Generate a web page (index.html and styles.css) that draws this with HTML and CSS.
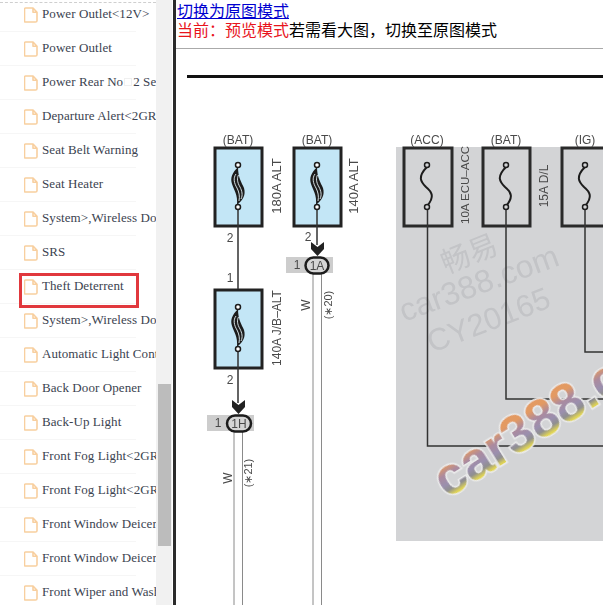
FILE: index.html
```html
<!DOCTYPE html>
<html lang="en">
<head>
  <meta charset="UTF-8">
  <meta name="viewport" content="width=device-width, initial-scale=1.0">
  <title>car388 wiring diagram</title>
  <link rel="stylesheet" href="styles.css">
</head>
<body>
  <svg class="defs" width="0" height="0">
    <defs>
      <symbol id="file" viewBox="0 0 14 17" preserveAspectRatio="none">
        <path d="M1.500 1h7.500l4 4.500v9a1.500 1.500 0 0 1-1.500 1.500h-10a1 1 0 0 1-1-1v-13a1 1 0 0 1 1-1z M9 1v4.500h4" fill="#fff" stroke="#f8cf9f" stroke-width="1.600" stroke-linejoin="round"/>
      </symbol>
    </defs>
  </svg>

  <aside class="sidebar">
    <ul class="tree">
      <li class="tree-row"><svg class="file-icon"><use href="#file"/></svg><span class="tree-label">Power Outlet&lt;12V&gt;</span></li>
      <li class="tree-row"><svg class="file-icon"><use href="#file"/></svg><span class="tree-label">Power Outlet</span></li>
      <li class="tree-row"><svg class="file-icon"><use href="#file"/></svg><span class="tree-label">Power Rear No<span class="tofu"></span>2 Seat</span></li>
      <li class="tree-row"><svg class="file-icon"><use href="#file"/></svg><span class="tree-label">Departure Alert&lt;2GR</span></li>
      <li class="tree-row"><svg class="file-icon"><use href="#file"/></svg><span class="tree-label">Seat Belt Warning</span></li>
      <li class="tree-row"><svg class="file-icon"><use href="#file"/></svg><span class="tree-label">Seat Heater</span></li>
      <li class="tree-row"><svg class="file-icon"><use href="#file"/></svg><span class="tree-label">System&gt;,Wireless Door</span></li>
      <li class="tree-row"><svg class="file-icon"><use href="#file"/></svg><span class="tree-label">SRS</span></li>
      <li class="tree-row is-marked"><svg class="file-icon"><use href="#file"/></svg><span class="tree-label">Theft Deterrent</span></li>
      <li class="tree-row"><svg class="file-icon"><use href="#file"/></svg><span class="tree-label">System&gt;,Wireless Door</span></li>
      <li class="tree-row"><svg class="file-icon"><use href="#file"/></svg><span class="tree-label">Automatic Light Control</span></li>
      <li class="tree-row"><svg class="file-icon"><use href="#file"/></svg><span class="tree-label">Back Door Opener</span></li>
      <li class="tree-row"><svg class="file-icon"><use href="#file"/></svg><span class="tree-label">Back-Up Light</span></li>
      <li class="tree-row"><svg class="file-icon"><use href="#file"/></svg><span class="tree-label">Front Fog Light&lt;2GR</span></li>
      <li class="tree-row"><svg class="file-icon"><use href="#file"/></svg><span class="tree-label">Front Fog Light&lt;2GR</span></li>
      <li class="tree-row"><svg class="file-icon"><use href="#file"/></svg><span class="tree-label">Front Window Deicer</span></li>
      <li class="tree-row"><svg class="file-icon"><use href="#file"/></svg><span class="tree-label">Front Window Deicer</span></li>
      <li class="tree-row"><svg class="file-icon"><use href="#file"/></svg><span class="tree-label">Front Wiper and Washer</span></li>
    </ul>
  </aside>
  <div class="scrollbar"><div class="scrollbar-thumb"></div></div>

  <main class="viewer">
    <div class="mode-bar">
      <a class="mode-link" href="#">切换为原图模式</a>
      <p class="mode-note"><span class="mode-current">当前：预览模式</span>若需看大图，切换至原图模式</p>
    </div>

    <!-- coordinates below are page pixels, so the viewBox starts at the viewer corner -->
    <svg class="diagram" viewBox="176 49 427 556" width="427" height="556">
      <defs>
        <linearGradient id="mark" x1="0" y1="0" x2="0" y2="1">
          <stop offset="0.3" stop-color="#e39a62"/>
          <stop offset="0.45" stop-color="#ab8a9f"/>
          <stop offset="0.6" stop-color="#9a8fae"/>
          <stop offset="0.7" stop-color="#8f8f8f"/>
          <stop offset="0.8" stop-color="#e2d654"/>
        </linearGradient>
        <filter id="soft" x="-5%" y="-5%" width="110%" height="110%"><feGaussianBlur stdDeviation="0.35"/></filter>
        <filter id="softer" x="-5%" y="-20%" width="110%" height="140%"><feGaussianBlur stdDeviation="0.7"/></filter>
        <filter id="bold-soft" x="-5%" y="-20%" width="110%" height="140%"><feGaussianBlur stdDeviation="0.6"/></filter>

        <g id="fuse-blue">
          <path d="M238 167C232 173 230 178 232 184C234 190 238 195 237 205C243 200 246 195 244 188C242 183 238 178 238 167z" fill="#1d1d1d"/>
          <path class="fuse-line" d="M236 174C233 178 234 183 237 188C239 192 240 196 239 201M238.500 175C237 178 237 182 240 187C242 191 243 195 241 199"/>
        </g>
        <path id="arrow-head" d="M-6.500 0L0 5L6.500 0V7L0 14L-6.500 7z"/>
      </defs>

      <rect x="187" y="75" width="416" height="3" fill="#111"/>

      <!-- grey panel -->
      <rect x="396" y="147" width="207" height="394" fill="#d3d4d6"/>

      <!-- pale watermark -->
      <g class="mark-pale" filter="url(#softer)">
        <text class="mark-cjk" transform="translate(446 274) rotate(-22)">畅易</text>
        <text class="mark-site" transform="translate(404 322) rotate(-20)">car388.com</text>
        <text class="mark-code" transform="translate(432 353) rotate(-21)">CY20165</text>
      </g>

      <g filter="url(#soft)">
        <!-- fused boxes, blue side -->
        <rect class="box-blue" x="215" y="148" width="47" height="78"/>
        <rect class="box-blue" x="294" y="148" width="47" height="78"/>
        <rect class="box-blue" x="215" y="290" width="47" height="78"/>

        <g class="wire">
          <path d="M238 207v82M238 349v54"/>
          <path d="M317 207v38"/>
        </g>
        <g class="wire-thin">
          <path d="M234 432v173M242.500 432v173"/>
          <path d="M313 274v331M321.500 274v331"/>
        </g>

        <use href="#fuse-blue"/>
        <use href="#fuse-blue" x="79"/>
        <use href="#fuse-blue" y="142"/>

        <circle class="pin" cx="238" cy="165" r="2.500"/>
        <circle class="pin" cx="238" cy="207" r="2.500"/>
        <circle class="pin" cx="317" cy="165" r="2.500"/>
        <circle class="pin" cx="317" cy="207" r="2.500"/>
        <circle class="pin" cx="238" cy="307" r="2.500"/>
        <circle class="pin" cx="238" cy="349" r="2.500"/>

        <!-- connectors -->
        <rect class="tag" x="207" y="415" width="47" height="16"/>
        <rect class="tag" x="286" y="257" width="47" height="16"/>
        <rect class="pill" x="227" y="415.500" width="24" height="16" rx="8"/>
        <rect class="pill" x="305.500" y="257.500" width="23" height="16" rx="8"/>
        <use class="arrow" href="#arrow-head" x="238.500" y="400"/>
        <use class="arrow" href="#arrow-head" x="317.500" y="242"/>

        <!-- grey panel boxes -->
        <rect class="box-plain" x="404" y="148" width="48" height="78"/>
        <rect class="box-plain" x="483" y="148" width="47" height="78"/>
        <rect class="box-plain" x="562" y="148" width="47" height="78"/>
        <path class="fuse-s" d="M427 167c-10 10-6 15-1 20 6 5 9 10 1 19"/>
        <path class="fuse-s" d="M506 167c-10 10-6 15-1 20 6 5 9 10 1 19"/>
        <path class="fuse-s" d="M585 167c-10 10-6 15-1 20 6 5 9 10 1 19"/>
        <circle class="pin-grey" cx="427" cy="165" r="2.500"/>
        <circle class="pin-grey" cx="427" cy="207" r="2.500"/>
        <circle class="pin-grey" cx="506" cy="165" r="2.500"/>
        <circle class="pin-grey" cx="506" cy="207" r="2.500"/>
        <circle class="pin-grey" cx="585" cy="165" r="2.500"/>
        <circle class="pin-grey" cx="585" cy="207" r="2.500"/>
        <g class="wire">
          <path d="M427.500 210v236h176"/>
          <path d="M506 210v189h97"/>
          <path d="M585 210v142h18"/>
        </g>

        <!-- labels -->
        <g class="label">
          <text x="238" y="144" text-anchor="middle">(BAT)</text>
          <text x="317" y="144" text-anchor="middle">(BAT)</text>
          <text x="427" y="144" text-anchor="middle">(ACC)</text>
          <text x="506" y="144" text-anchor="middle">(BAT)</text>
          <text x="585" y="144" text-anchor="middle">(IG)</text>
          <text x="230" y="242" text-anchor="middle">2</text>
          <text x="230" y="282" text-anchor="middle">1</text>
          <text x="308" y="241" text-anchor="middle">2</text>
          <text x="230" y="384" text-anchor="middle">2</text>
          <text x="297" y="269" text-anchor="middle">1</text>
          <text x="218" y="427" text-anchor="middle">1</text>
          <text x="317" y="270" text-anchor="middle">1A</text>
          <text x="239" y="428" text-anchor="middle">1H</text>
          <text class="label-wide" transform="translate(281 186) rotate(-90)" text-anchor="middle">180A ALT</text>
          <text class="label-wide" transform="translate(358 186) rotate(-90)" text-anchor="middle">140A ALT</text>
          <text transform="translate(281 328) rotate(-90)" text-anchor="middle">140A J/B–ALT</text>
          <text class="label-tight" transform="translate(469 185) rotate(-90)" text-anchor="middle">10A ECU–ACC</text>
          <text transform="translate(548 186) rotate(-90)" text-anchor="middle">15A D/L</text>
          <text transform="translate(310 305) rotate(-90)" text-anchor="middle">W</text>
          <text transform="translate(232 478) rotate(-90)" text-anchor="middle">W</text>
          <text class="label-small" transform="translate(332 305) rotate(-90)" text-anchor="middle">(∗20)</text>
          <text class="label-small" transform="translate(252 473) rotate(-90)" text-anchor="middle">(∗21)</text>
        </g>
      </g>

      <!-- coloured watermark -->
      <text class="mark-bold" filter="url(#bold-soft)" transform="translate(447 499) rotate(-32)">car388.com</text>
    </svg>
  </main>
</body>
</html>
```

FILE: styles.css
```css
* {
  margin: 0;
  padding: 0;
  box-sizing: border-box;
}

html, body {
  height: 100%;
  overflow: hidden;
}

body {
  display: flex;
  background: #fff;
  font-family: "Noto Sans CJK SC", "Liberation Sans", sans-serif;
}

.defs {
  position: absolute;
}

/* left tree */
.sidebar {
  position: relative;
  width: 156px;
  flex: none;
  overflow: hidden;
}

/* dashed rule runs over the first row, which is scrolled partly out of view */
.sidebar::before {
  content: "";
  position: absolute;
  left: 0;
  right: 0;
  top: 2px;
  border-top: 1px dashed #cfcfcf;
}

.tree {
  list-style: none;
  margin-top: -2px;
}

.tree-row {
  position: relative;
  display: flex;
  align-items: center;
  width: 136px;
  height: 34px;
  padding-left: 24px;
  border-bottom: 1px solid #f6f6f6;
  white-space: nowrap;
}

.file-icon {
  width: 14px;
  height: 16px;
  flex: none;
  margin-right: 4px;
}

.tree-label {
  padding-bottom: 1px;
  font-family: "Liberation Serif", serif;
  font-size: 13px;
  letter-spacing: 0.08px;
  color: #3b4350;
}

.tofu {
  display: inline-block;
  width: 8px;
  height: 8px;
  margin: 0 1px;
  border: 1px solid #f0f0f0;
}

/* pseudo elements miss the reset above, so these sizes are content-box */
.is-marked::after {
  content: "";
  position: absolute;
  left: 19px;
  top: 3px;
  width: 114px;
  height: 29px;
  border: 3px solid #e1383d;
}

.scrollbar {
  width: 16px;
  flex: none;
  background: #f1f1f1;
  margin-right: 1px;
}

.scrollbar-thumb {
  height: 162px;
  margin: 384px 1px 0 2px;
  background: #bcbcbc;
}

/* right frame */
.viewer {
  flex: 1;
  min-width: 0;
  border-left: 3px solid #2b2b2b;
}

.mode-bar {
  height: 49px;
  padding: 1px 0 0 1px;
  border-bottom: 1px solid #aaa;
  font-size: 16px;
  line-height: 19px;
}

.mode-link {
  color: #0000d0;
}

.mode-note {
  color: #000;
}

.mode-current {
  color: #e8141c;
}

.diagram {
  display: block;
}

.box-blue {
  fill: #c3e6f6;
  stroke: #222;
  stroke-width: 3;
}

.box-plain {
  fill: none;
  stroke: #2a2a2a;
  stroke-width: 3;
}

.wire path {
  fill: none;
  stroke: #333;
  stroke-width: 1.500;
}

.wire-thin path {
  fill: none;
  stroke: #8a8a8a;
  stroke-width: 1;
}

.fuse-line {
  fill: none;
  stroke: #e8f4f8;
  stroke-width: 0.900;
}

.fuse-s {
  fill: none;
  stroke: #1d1d1d;
  stroke-width: 2;
}

.pin {
  fill: #fff;
  stroke: #1d1d1d;
  stroke-width: 1.500;
}

.pin-grey {
  fill: #d3d4d6;
  stroke: #1d1d1d;
  stroke-width: 1.500;
}

.tag {
  fill: #cdcdcd;
}

.pill {
  fill: #d5d5d5;
  stroke: #1a1a1a;
  stroke-width: 2.500;
}

.arrow {
  fill: #222;
}

.label text {
  font-family: "Liberation Sans", sans-serif;
  font-size: 12px;
  fill: #4a4a4a;
}

.label .label-wide {
  font-size: 13px;
}

.label .label-tight {
  font-size: 11.500px;
}

.label .label-small {
  font-size: 11px;
}

.mark-pale text {
  fill: #c3c4c7;
}

.mark-cjk {
  font-family: "Noto Sans CJK SC", sans-serif;
  font-size: 29px;
}

.mark-site {
  font-family: "Liberation Sans", sans-serif;
  font-size: 32px;
}

.mark-code {
  font-family: "Liberation Sans", sans-serif;
  font-size: 31px;
}

.mark-bold {
  font-family: "Liberation Sans", sans-serif;
  font-size: 53px;
  font-weight: 700;
  fill: url(#mark);
  stroke: #ececec;
  stroke-width: 3;
  paint-order: stroke;
}
```
